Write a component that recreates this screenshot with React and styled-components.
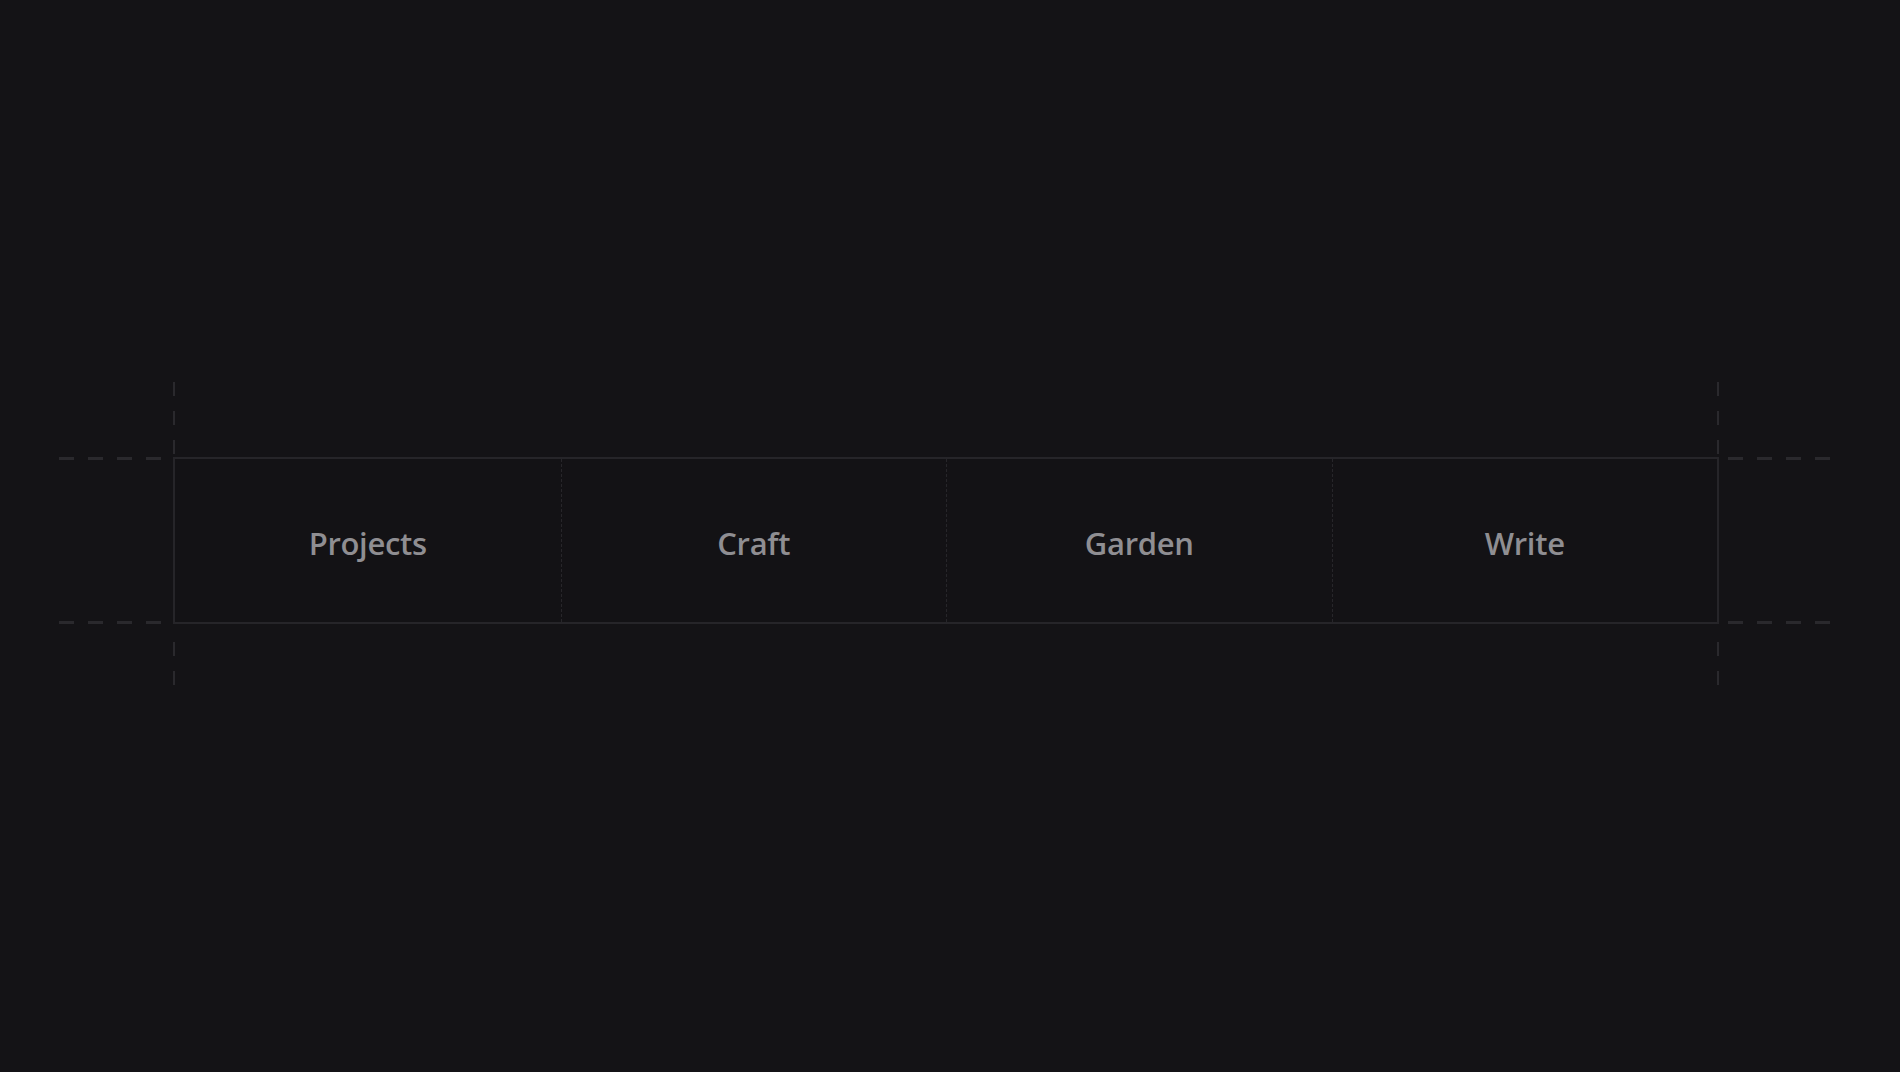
import React from "react";
import styled, { createGlobalStyle } from "styled-components";

const Global = createGlobalStyle`
  html, body { margin: 0; padding: 0; background: #141316; }
  body { font-family: "Open Sans", "Liberation Sans", sans-serif; }
`;

const Page = styled.div`
  width: 1900px;
  height: 1072px;
  box-sizing: border-box;
  padding: 382px 0 0 59px;
  background-color: #141316;
`;

const Frame = styled.div`
  display: grid;
  grid-template-columns: 114px 1546px 111px;
  grid-template-rows: 75px 167px 61px;
  grid-template-areas:
    ". top ."
    "left bar right"
    ". bottom .";
`;

const TickRow = styled.div`
  grid-area: ${(p) => p.$area};
  display: flex;
  justify-content: space-between;
  padding: ${(p) => (p.$area === "top" ? "0 0 3px 0" : "18px 0 0 0")};
`;

const VTick = styled.span`
  width: 2px;
  background: repeating-linear-gradient(
    to bottom,
    #2a292d 0 14px,
    transparent 14px 29px
  );
`;

const Side = styled.div`
  grid-area: ${(p) => p.$area};
  display: flex;
  flex-direction: column;
  justify-content: space-between;
  align-items: ${(p) => (p.$area === "left" ? "flex-start" : "flex-end")};
`;

const HDash = styled.span`
  width: 102px;
  height: 3px;
  background: repeating-linear-gradient(
    to right,
    #2a292d 0 15px,
    transparent 15px 29px
  );
`;

const Bar = styled.nav`
  grid-area: bar;
  display: grid;
  grid-template-columns: repeat(4, 1fr);
  box-sizing: border-box;
  border: 2px solid #262529;
  background: #131215;
`;

const Cell = styled.a`
  display: flex;
  align-items: center;
  justify-content: center;
  padding-top: 4px;
  color: #8f8e92;
  font-size: 31px;
  font-weight: 600;
  letter-spacing: -0.3px;
  text-decoration: none;
  border-left: ${(p) => (p.$first ? "none" : "1px dashed #27262a")};
`;

const items = ["Projects", "Craft", "Garden", "Write"];

export default function App() {
  return (
    <>
      <Global />
      <Page>
        <Frame>
          <TickRow $area="top">
            <VTick />
            <VTick />
          </TickRow>
          <Side $area="left">
            <HDash />
            <HDash />
          </Side>
          <Bar>
            {items.map((t, i) => (
              <Cell key={t} href="#" $first={i === 0}>
                {t}
              </Cell>
            ))}
          </Bar>
          <Side $area="right">
            <HDash />
            <HDash />
          </Side>
          <TickRow $area="bottom">
            <VTick />
            <VTick />
          </TickRow>
        </Frame>
      </Page>
    </>
  );
}
